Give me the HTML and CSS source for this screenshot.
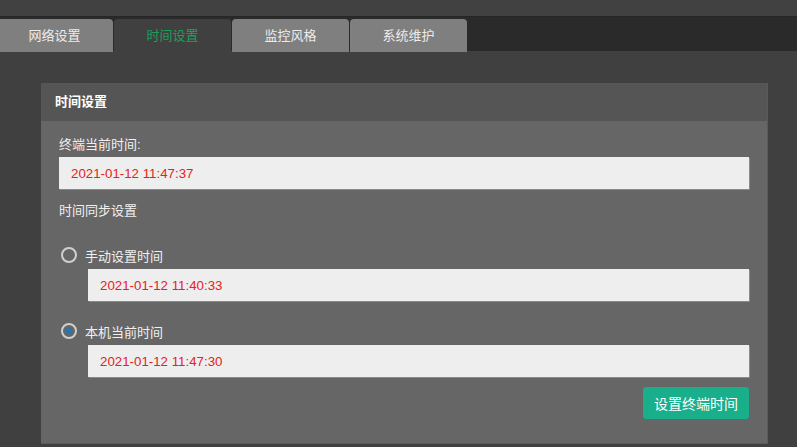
FILE: index.html
```html
<!DOCTYPE html>
<html lang="zh-CN">
<head>
    <meta charset="UTF-8">
    <title>时间设置</title>
    <link rel="stylesheet" href="styles.css">
</head>
<body>
    <div class="topbar"></div>
    <div class="tabs">
        <div class="tab">网络设置</div>
        <div class="tab active">时间设置</div>
        <div class="tab">监控风格</div>
        <div class="tab">系统维护</div>
    </div>
    <div class="main">
        <div class="panel">
            <div class="panel-head">时间设置</div>
            <div class="panel-body">
                <div class="label">终端当前时间:</div>
                <div class="field">2021-01-12 11:47:37</div>
                <div class="label sync">时间同步设置</div>
                <div class="radio-row">
                    <span class="radio"></span>
                    <span>手动设置时间</span>
                </div>
                <div class="field indent">2021-01-12 11:40:33</div>
                <div class="radio-row">
                    <span class="radio checked"></span>
                    <span>本机当前时间</span>
                </div>
                <div class="field indent">2021-01-12 11:47:30</div>
                <div class="actions">
                    <button class="btn" type="button">设置终端时间</button>
                </div>
            </div>
        </div>
    </div>
</body>
</html>
```

FILE: styles.css
```css
body, html {
    margin: 0;
    padding: 0;
}
body {
    width: 797px;
    height: 447px;
    overflow: hidden;
    background: #404040;
    font-family: "Liberation Sans", "Noto Sans CJK SC", sans-serif;
    font-size: 13px;
    color: #f0f0f0;
}
.topbar {
    height: 16px;
    background: #414141;
}
.tabs {
    display: flex;
    gap: 1px;
    height: 35px;
    padding-top: 2px;
    box-sizing: border-box;
    background: #2a2a2a;
    border-top: 1px solid #262626;
}
.tabs .tab:first-child {
    margin-left: -4px;
}
.tab {
    width: 117px;
    height: 33px;
    line-height: 34px;
    text-align: center;
    background: #7f7f7f;
    color: #ececec;
    font-size: 13px;
    border-radius: 4px 4px 0 0;
}
.tab.active {
    background: #404040;
    color: #1d9f5a;
}
.main {
    padding: 32px 29px 0 41px;
}
.panel {
    background: #666666;
    border-right: 1px solid #5a5a5a;
    border-bottom: 1px solid #5a5a5a;
    height: 360px;
}
.panel-head {
    height: 38px;
    line-height: 38px;
    padding-left: 14px;
    background: #555555;
    font-weight: bold;
    color: #ffffff;
}
.panel-body {
    padding: 14px 18px 0 18px;
}
.label {
    height: 22px;
    line-height: 20px;
}
.label.sync {
    margin-top: 12px;
    height: 24px;
}
.field {
    height: 32px;
    line-height: 33px;
    padding-left: 12px;
    background: #eeeeee;
    color: #e52222;
    font-size: 13.3px;
    box-shadow: 1px 1px 0 #8a8a8a;
}
.field.indent {
    margin-left: 29px;
}
.radio-row {
    display: flex;
    align-items: center;
    gap: 8px;
    height: 24px;
    margin: 18px 0 2px 2px;
}
.radio {
    width: 12px;
    height: 12px;
    border: 2px solid #d0d0d0;
    border-radius: 50%;
    display: flex;
    align-items: center;
    justify-content: center;
}
.radio.checked::after {
    content: "";
    width: 6px;
    height: 6px;
    border-radius: 50%;
    background: #1c78bb;
}
.actions {
    display: flex;
    justify-content: flex-end;
    margin-top: 10px;
}
.btn {
    height: 32px;
    padding: 0 11px;
    border: 0;
    border-radius: 3px;
    background: #1aaf8b;
    color: #ffffff;
    font-family: "Noto Sans CJK SC", sans-serif;
    font-size: 14px;
}
```
